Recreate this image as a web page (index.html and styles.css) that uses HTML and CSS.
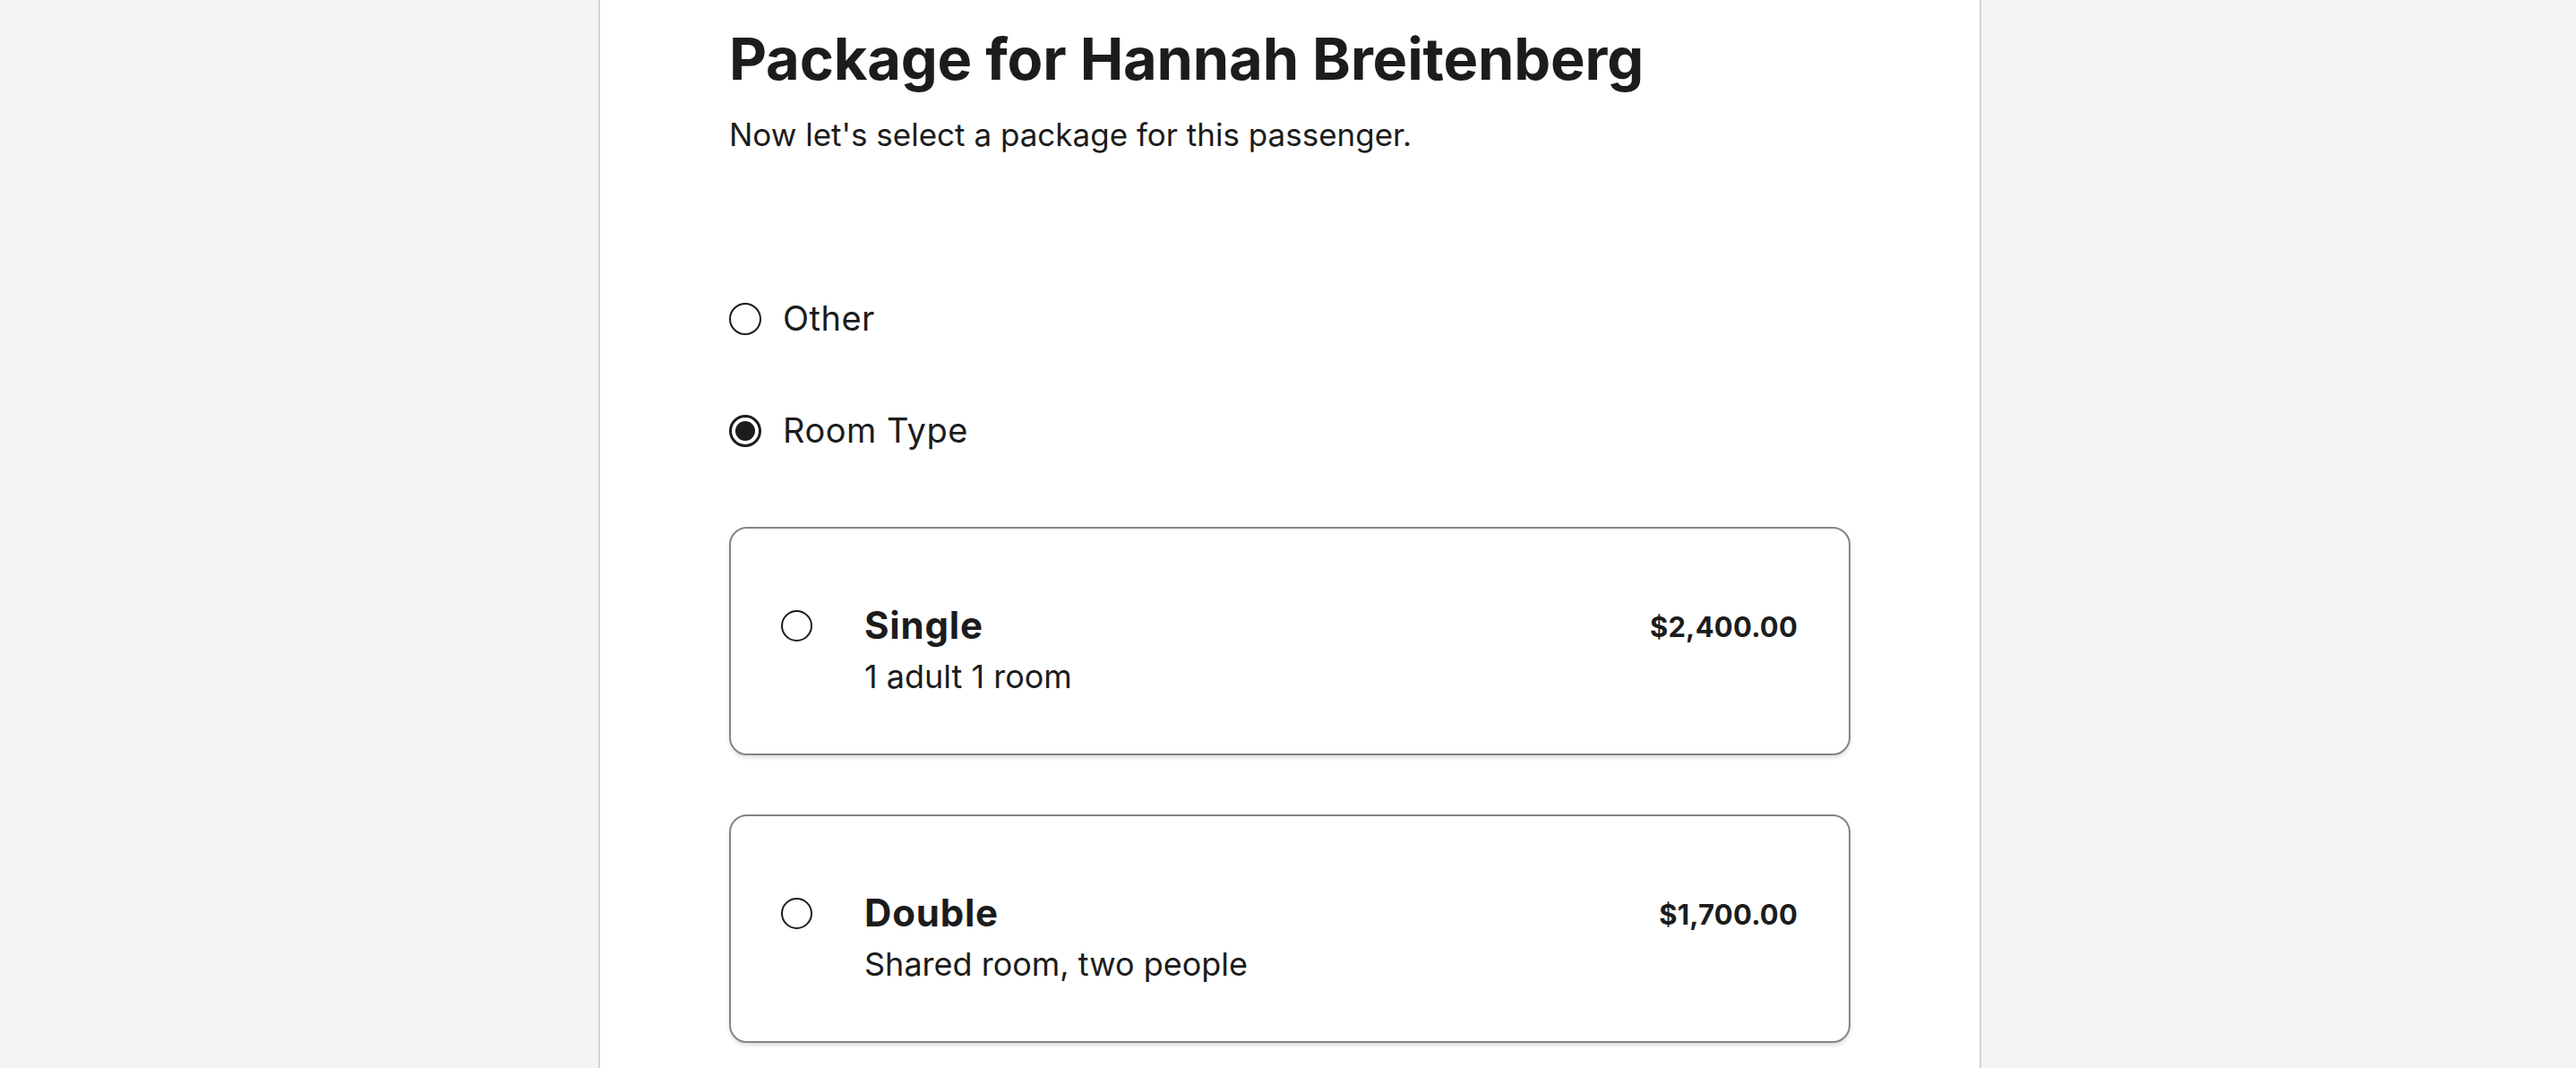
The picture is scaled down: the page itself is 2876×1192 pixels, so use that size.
FILE: index.html
```html
<!DOCTYPE html>
<html lang="en">
<head>
<meta charset="utf-8">
<title>Package for Hannah Breitenberg</title>
<link rel="stylesheet" href="styles.css">
</head>
<body>
<div class="page">
  <main class="panel">
    <h1 class="title">Package for Hannah Breitenberg</h1>
    <p class="subtitle">Now let's select a package for this passenger.</p>

    <div class="choices">
      <label class="choice">
        <span class="radio"></span>
        <span class="choice-label">Other</span>
      </label>
      <label class="choice">
        <span class="radio checked"></span>
        <span class="choice-label">Room Type</span>
      </label>
    </div>

    <div class="cards">
      <div class="card">
        <span class="radio small"></span>
        <div class="card-text">
          <div class="card-title">Single</div>
          <div class="card-desc">1 adult 1 room</div>
        </div>
        <div class="card-price">$2,400.00</div>
      </div>
      <div class="card">
        <span class="radio small"></span>
        <div class="card-text">
          <div class="card-title">Double</div>
          <div class="card-desc">Shared room, two people</div>
        </div>
        <div class="card-price">$1,700.00</div>
      </div>
    </div>
  </main>
</div>
</body>
</html>
```

FILE: styles.css
```css
* { box-sizing: border-box; }

html, body {
  margin: 0;
  height: 100%;
}

body {
  background: #f4f4f6;
  font-family: "Inter", "Noto Sans", sans-serif;
  color: #1c1c1c;
  padding-left: 4px;
}

.page {
  height: 100%;
}

.panel {
  width: 1544px;
  min-height: 100%;
  margin: 0 auto;
  background: #ffffff;
  border-left: 2px solid #d4d4d6;
  border-right: 2px solid #d4d4d6;
  padding: 28px 144px 0;
}

.title {
  margin: 0;
  font-size: 65px;
  line-height: 76px;
  font-weight: 700;
  letter-spacing: -0.2px;
}

.subtitle {
  margin: 22px 0 0;
  font-size: 35px;
  line-height: 48px;
  font-weight: 400;
}

.choices {
  margin-top: 160px;
  display: flex;
  flex-direction: column;
  gap: 82px;
}

.choice {
  display: flex;
  align-items: center;
  gap: 24px;
  font-size: 38px;
  line-height: 43px;
  letter-spacing: 0.5px;
}

.radio {
  flex: none;
  width: 36px;
  height: 36px;
  border: 2px solid #1c1c1c;
  border-radius: 50%;
  background: #fff;
  position: relative;
}

.radio.checked {
  border-width: 3px;
}

.radio.checked::after {
  content: "";
  position: absolute;
  left: 4px;
  top: 4px;
  width: 22px;
  height: 22px;
  border-radius: 50%;
  background: #1c1c1c;
}

.radio.small {
  width: 35px;
  height: 35px;
  margin-top: 7px;
}

.cards {
  margin-top: 86px;
  display: flex;
  flex-direction: column;
  gap: 66px;
}

.card {
  display: flex;
  align-items: flex-start;
  border: 2px solid #858585;
  border-radius: 20px;
  box-shadow: 0 3px 4px rgba(0, 0, 0, 0.12);
  padding: 84px 57px 66px 56px;
  background: #fff;
}

.card-text {
  flex: 1;
  margin-left: 58px;
}

.card-title {
  font-size: 42px;
  line-height: 48px;
  font-weight: 700;
  letter-spacing: 0.8px;
}

.card-desc {
  margin-top: 13px;
  font-size: 36px;
  line-height: 40px;
}

.card-price {
  font-size: 31px;
  line-height: 48px;
  font-weight: 700;
  letter-spacing: 0.2px;
  padding-top: 2px;
}
```
